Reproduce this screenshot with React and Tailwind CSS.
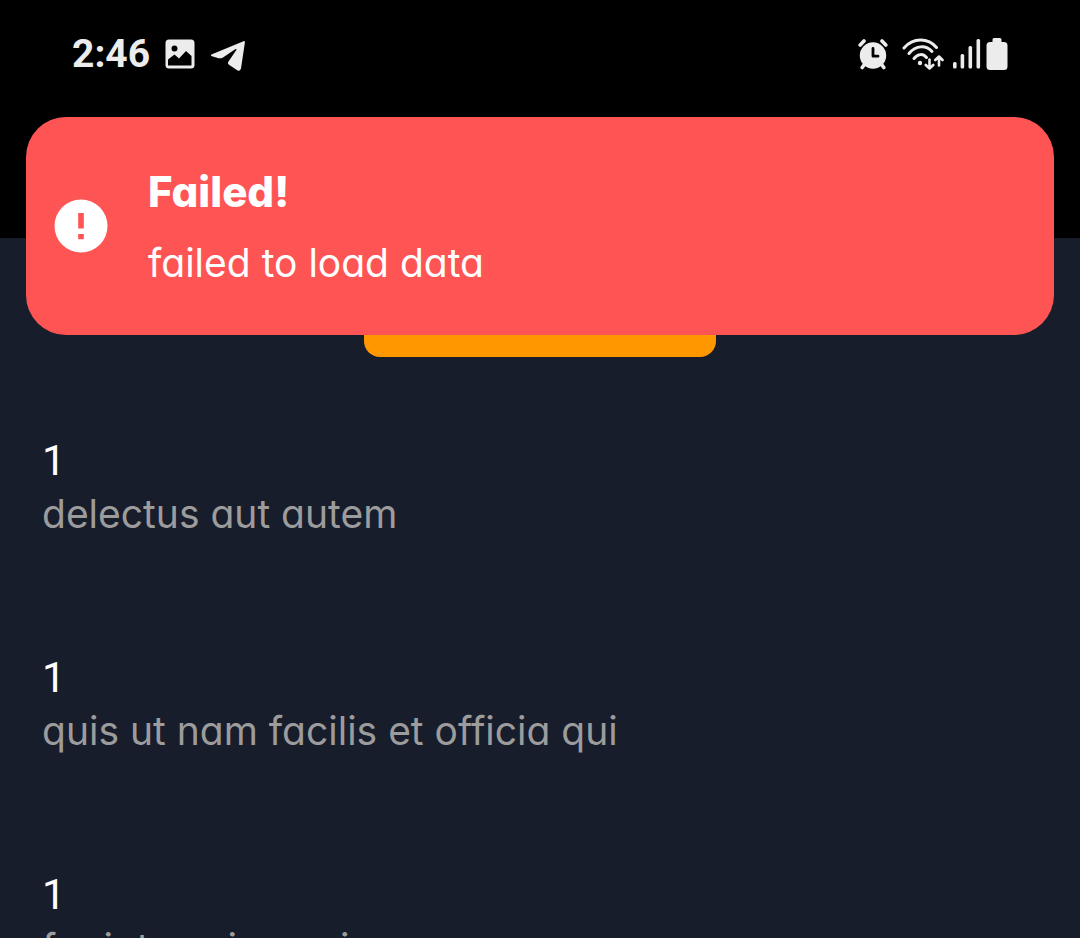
const items = [
  { userId: 1, title: "delectus aut autem" },
  { userId: 1, title: "quis ut nam facilis et officia qui" },
  { userId: 1, title: "fugiat veniam minus" },
];

function ImageIcon() {
  return (
    <svg viewBox="0 0 30 30" className="size-[30px]" aria-hidden="true">
      <path
        fill="currentColor"
        fillRule="evenodd"
        d="M4 0.5H26Q29.500 0.5 29.500 4V26Q29.500 29.5 26 29.5H4Q0.5 29.5 0.5 26V4Q0.5 0.5 4 0.5ZM9.500 6.5A3 3 0 1 0 9.500 12.5A3 3 0 1 0 9.500 6.5ZM3 20.500V26.5H26.500V17L21 12L14 19.500L9.500 15.500Z"
      />
    </svg>
  );
}

function TelegramIcon() {
  return (
    <svg viewBox="0 0 36 32" className="mt-1 h-8 w-9" aria-hidden="true">
      <path
        fill="currentColor"
        d="M33.500 1.200Q35 0.700 34.900 2.500L31 28.500Q30 31.500 27.600 30.500L19 24.800Q17.200 23.300 18.500 21.500L26.500 9.800Q26.500 8.700 25.200 9.300L13 17.400Q10.800 18.700 8.500 18.200L2 16.300Q-0.300 15.300 2 14.200Z"
      />
    </svg>
  );
}

function AlarmIcon() {
  return (
    <svg viewBox="0 0 30 32" className="h-8 w-[30px]" aria-hidden="true">
      <g stroke="currentColor" strokeWidth="3.600" strokeLinecap="round" fill="none">
        <path d="M2.200 7L6 3M24 3L27.800 7" />
        <path d="M6 27L4.200 29.500M24 27L25.800 29.500" />
      </g>
      <circle cx="15" cy="17.500" r="13.200" fill="currentColor" />
      <path
        d="M15 10.500V18.200H20"
        fill="none"
        stroke="black"
        strokeWidth="2.800"
        strokeLinecap="round"
        strokeLinejoin="round"
      />
    </svg>
  );
}

function WifiIcon() {
  return (
    <svg viewBox="0 0 42 32" className="h-8 w-[42px]" aria-hidden="true">
      <g
        fill="none"
        stroke="currentColor"
        strokeWidth="3"
        strokeLinecap="round"
        strokeLinejoin="round"
      >
        <path d="M2 10C11 -0.500 26 -0.500 34.500 9.500" />
        <path d="M7 15.500C14 7 24 7 30 13.500" />
        <path d="M12 20.500C16 15.500 21 15.500 24.500 19.500" />
        <path
          strokeWidth="2.600"
          d="M27.500 21.500V30M23.800 27L27.500 30.500L31.200 27M37 27.500V19M33.300 22L37 18.500L40.500 22"
        />
      </g>
      <circle cx="18" cy="25" r="2.200" fill="currentColor" />
    </svg>
  );
}

function SignalIcon() {
  return (
    <svg viewBox="0 0 30 32" className="h-8 w-[30px]" aria-hidden="true">
      <g fill="currentColor">
        <rect x="1" y="24" width="3.600" height="6.500" rx="1.500" />
        <rect x="8.600" y="16" width="3.600" height="14.500" rx="1.500" />
        <rect x="16.500" y="8" width="3.600" height="22.500" rx="1.500" />
        <rect x="24.500" y="1" width="3.600" height="29.500" rx="1.500" />
      </g>
    </svg>
  );
}

function BatteryIcon() {
  return (
    <svg viewBox="0 0 22 34" className="h-[34px] w-[22px]" aria-hidden="true">
      <path
        fill="currentColor"
        d="M8 1H14Q15.500 1 15.500 2.500V5H18Q21.500 5 21.500 8.500V29.500Q21.500 33 18 33H4Q0.500 33 0.500 29.500V8.500Q0.500 5 4 5H6.500V2.500Q6.500 1 8 1Z"
      />
    </svg>
  );
}

function ErrorIcon() {
  return (
    <svg viewBox="0 0 54 54" className="size-[54px] shrink-0" aria-hidden="true">
      <circle cx="27" cy="27" r="26.500" fill="white" />
      <path fill="#ff5454" d="M24.200 14H29.800V29.500H24.200ZM24.200 35H29.800V40.300H24.200Z" />
    </svg>
  );
}

function StatusBar() {
  return (
    <div className="flex h-[108px] items-center justify-between px-[72px] text-[#ececec]">
      <div className="flex items-center gap-[15px]">
        <time className="font-[Roboto,sans-serif] text-[39px] leading-[44px] font-bold">2:46</time>
        <ImageIcon />
        <TelegramIcon />
      </div>
      <div className="flex items-center">
        <AlarmIcon />
        <div className="ml-[14px] flex items-center gap-2">
          <WifiIcon />
          <div className="flex items-center gap-1">
            <SignalIcon />
            <BatteryIcon />
          </div>
        </div>
      </div>
    </div>
  );
}

function Toast() {
  return (
    <div
      role="alert"
      className="absolute inset-x-[26px] top-[117px] flex items-center gap-10 rounded-[40px] bg-[#ff5454] py-10 pr-7 pl-7 text-white"
    >
      <ErrorIcon />
      <div className="flex flex-col gap-1">
        <p className="text-[42px] leading-[70px] font-extrabold">Failed!</p>
        <p className="text-[39px] leading-[64px]">failed to load data</p>
      </div>
    </div>
  );
}

export default function App() {
  return (
    <div className="relative h-screen overflow-hidden bg-[#181d2c] font-[Inter,sans-serif] [font-feature-settings:'cv11']">
      <header className="h-[238px] bg-black">
        <StatusBar />
      </header>
      <main>
        <div className="flex justify-center">
          <button
            type="button"
            aria-label="Load data"
            className="h-[119px] w-[352px] rounded-2xl bg-[#ff9800]"
          />
        </div>
        <ul className="mt-[74px] flex flex-col gap-[111px] px-[42px]">
          {items.map((item) => (
            <li key={item.title}>
              <p className="font-[Roboto,sans-serif] text-[42px] leading-[60px] text-white">
                {item.userId}
              </p>
              <p className="text-[39px] leading-[46px] text-[#9c9c9c]">{item.title}</p>
            </li>
          ))}
        </ul>
      </main>
      <Toast />
    </div>
  );
}
